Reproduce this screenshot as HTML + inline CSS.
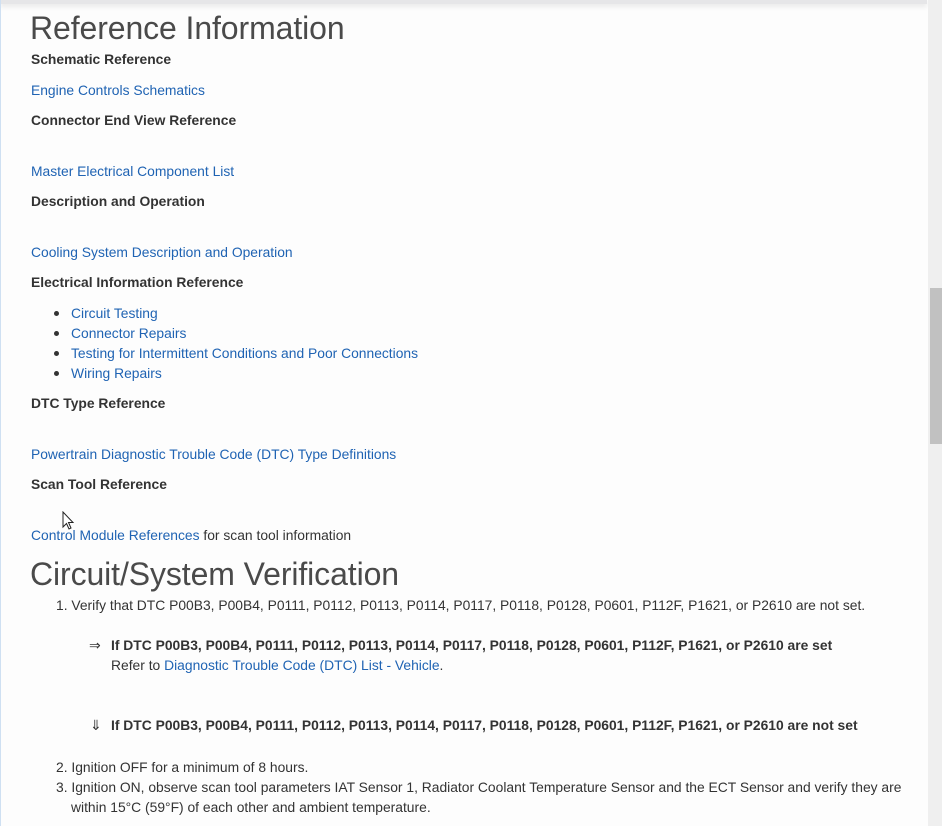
<!DOCTYPE html>
<html><head><meta charset="utf-8"><style>
html,body{margin:0;padding:0;width:942px;height:826px;overflow:hidden;background:#fdfdfd;font-family:"Liberation Sans",sans-serif;color:#333;}
.t{position:absolute;white-space:nowrap;font-size:13.85px;line-height:20px;}
.b{font-weight:bold;color:#333;}
a{color:#1f63b3;text-decoration:none;}
.h{position:absolute;white-space:nowrap;font-size:32px;line-height:40px;color:#4a4a4a;letter-spacing:-0.1px;}
.dot{position:absolute;width:5px;height:5px;border-radius:50%;background:#333;}
</style></head><body>
<div style="position:absolute;left:0;top:0;width:927px;height:4px;background:#e6e6e8;box-shadow:0 2px 6px rgba(0,0,0,.12)"></div>
<div style="position:absolute;left:0;top:0;width:1px;height:826px;background:#cfe0f2"></div>
<div style="position:absolute;left:928px;top:0;width:14px;height:826px;background:#efefef"></div>
<div style="position:absolute;left:930px;top:288px;width:12px;height:156px;background:#c1c1c1"></div>

<div class="h" style="left:30px;top:8px">Reference Information</div>
<div class="t b" style="left:31px;top:49px">Schematic Reference</div>
<div class="t" style="left:31px;top:80px"><a>Engine Controls Schematics</a></div>
<div class="t b" style="left:31px;top:110px">Connector End View Reference</div>
<div class="t" style="left:31px;top:161px"><a>Master Electrical Component List</a></div>
<div class="t b" style="left:31px;top:191px">Description and Operation</div>
<div class="t" style="left:31px;top:242px"><a>Cooling System Description and Operation</a></div>
<div class="t b" style="left:31px;top:272px">Electrical Information Reference</div>
<div class="dot" style="left:54px;top:311px"></div>
<div class="t" style="left:71px;top:303px"><a>Circuit Testing</a></div>
<div class="dot" style="left:54px;top:331px"></div>
<div class="t" style="left:71px;top:323px"><a>Connector Repairs</a></div>
<div class="dot" style="left:54px;top:351px"></div>
<div class="t" style="left:71px;top:343px"><a>Testing for Intermittent Conditions and Poor Connections</a></div>
<div class="dot" style="left:54px;top:371px"></div>
<div class="t" style="left:71px;top:363px"><a>Wiring Repairs</a></div>
<div class="t b" style="left:31px;top:393px">DTC Type Reference</div>
<div class="t" style="left:31px;top:444px"><a>Powertrain Diagnostic Trouble Code (DTC) Type Definitions</a></div>
<div class="t b" style="left:31px;top:474px">Scan Tool Reference</div>
<div class="t" style="left:31px;top:525px"><a>Control Module References</a> for scan tool information</div>
<svg style="position:absolute;left:62px;top:511px" width="14" height="20" viewBox="0 0 14 20"><path d="M1 1 L1 16 L4.5 12.5 L7 18 L9 17 L6.5 11.5 L11 11.5 Z" fill="#fff" stroke="#222" stroke-width="1"/></svg>

<div class="h" style="left:30px;top:554px">Circuit/System Verification</div>
<div class="t" style="left:56px;top:595px">1. Verify that DTC P00B3, P00B4, P0111, P0112, P0113, P0114, P0117, P0118, P0128, P0601, P112F, P1621, or P2610 are not set.</div>
<div class="t" style="left:89px;top:635px">⇒</div>
<div class="t b" style="left:111px;top:635px">If DTC P00B3, P00B4, P0111, P0112, P0113, P0114, P0117, P0118, P0128, P0601, P112F, P1621, or P2610 are set</div>
<div class="t" style="left:111px;top:655px">Refer to <a>Diagnostic Trouble Code (DTC) List - Vehicle</a>.</div>
<div class="t" style="left:90px;top:715px">⇓</div>
<div class="t b" style="left:111px;top:715px">If DTC P00B3, P00B4, P0111, P0112, P0113, P0114, P0117, P0118, P0128, P0601, P112F, P1621, or P2610 are not set</div>
<div class="t" style="left:56px;top:757px">2. Ignition OFF for a minimum of 8 hours.</div>
<div class="t" style="left:56px;top:777px">3. Ignition ON, observe scan tool parameters IAT Sensor 1, Radiator Coolant Temperature Sensor and the ECT Sensor and verify they are</div>
<div class="t" style="left:71px;top:797px">within 15°C (59°F) of each other and ambient temperature.</div>
</body></html>
